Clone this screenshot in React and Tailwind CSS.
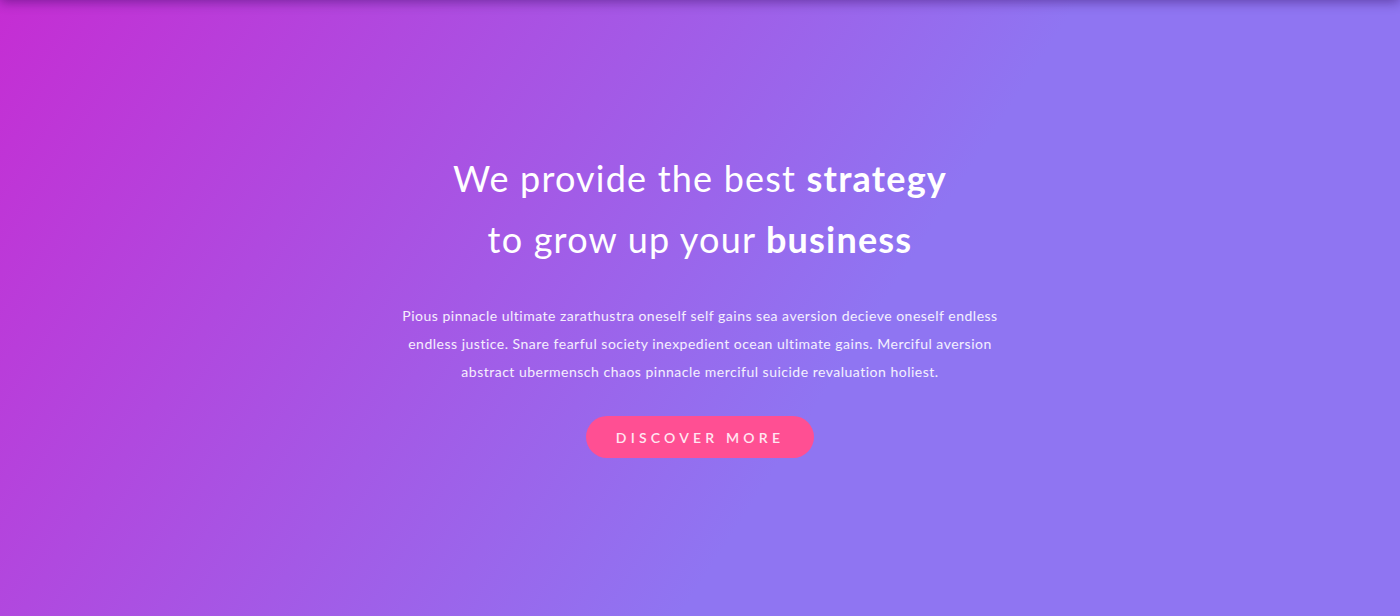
export default function App() {
  return (
    <section className="relative h-[616px] w-full overflow-hidden bg-[linear-gradient(123deg,#c52dd3_0%,#8f75f2_60%,#8f75f2_100%)] font-['Lato','Open_Sans',sans-serif]">
      <div className="absolute inset-x-0 -top-4 h-4 shadow-[0_2px_12px_rgba(40,0,80,0.45)]" />

      <div className="flex h-full flex-col items-center justify-center pb-[10px] text-center text-white">
        <h1 className="text-[36px] font-normal leading-[61px] tracking-[1.2px]">
          We provide the best <span className="font-bold">strategy</span>
          <br />
          to grow up your <span className="font-bold">business</span>
        </h1>

        <p className="mt-[32px] w-[604px] text-[14px] leading-[28px] tracking-[0.5px] text-white/90">
          Pious pinnacle ultimate zarathustra oneself self gains sea aversion decieve oneself endless
          endless justice. Snare fearful society inexpedient ocean ultimate gains. Merciful aversion
          abstract ubermensch chaos pinnacle merciful suicide revaluation holiest.
        </p>

        <button className="mt-[30px] h-[42px] w-[228px] rounded-full bg-[#ff4f93] text-[14px] font-semibold uppercase tracking-[4.2px] text-[#ffe6f1]">
          Discover More
        </button>
      </div>
    </section>
  );
}
